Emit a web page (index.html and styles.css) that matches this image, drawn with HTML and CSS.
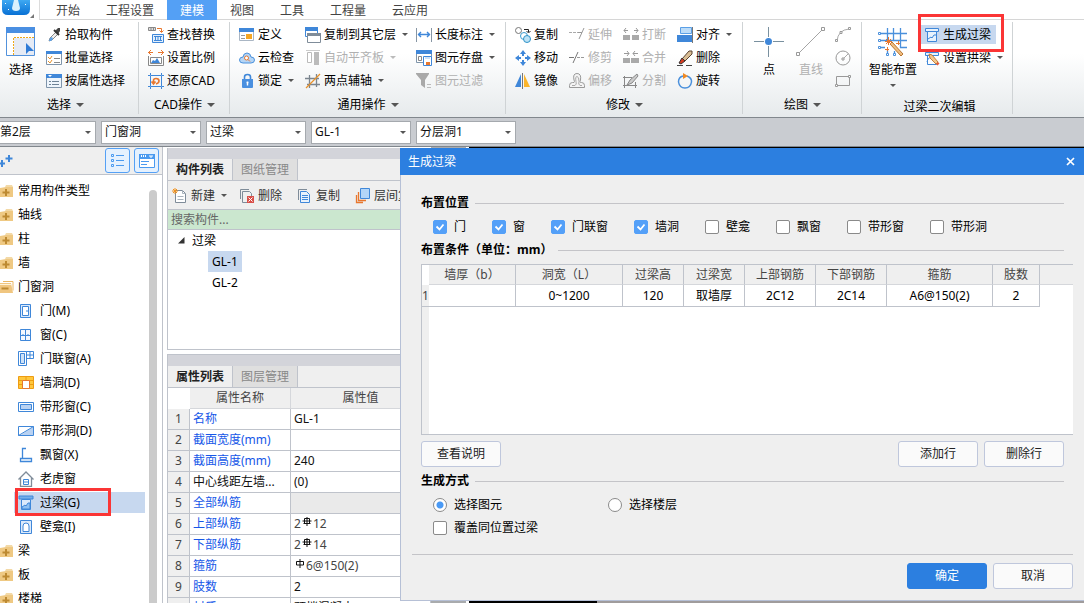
FILE: index.html
```html
<!DOCTYPE html>
<html lang="zh-CN">
<head>
<meta charset="utf-8">
<title>生成过梁</title>
<link rel="stylesheet" href="styles.css">
</head>
<body>
<svg class="sprite" aria-hidden="true">
  <symbol id="folder" viewBox="0 0 14 14"><path d="M6 1h6l1 2H5z" fill="#f3d9a6"/><path d="M0 4l6-1h7v10H0z" fill="#efc983"/><path d="M2.500 8.500h7M6 5v7" stroke="#bd8a32" stroke-width="2"/></symbol>
  <symbol id="folder-open" viewBox="0 0 14 14"><path d="M3 1.500h10v9" fill="none" stroke="#e9b763"/><path d="M0 3h11l2 10H0z" fill="#f0c680"/><path d="M0 4.500h11" stroke="#fff3d8"/><path d="M1.500 8.500h7" stroke="#bd8a32" stroke-width="2"/></symbol>
  <symbol id="rebar-c" viewBox="0 0 10 10"><path d="M5 0v9M2.500 1.500h5v5h-5zM.5 4h9M1.500 6.500h7" fill="none" stroke="#111"/></symbol>
  <symbol id="rebar-a" viewBox="0 0 10 10"><path d="M5 0v9M1.500 2.500h7v3.500h-7z" fill="none" stroke="#111"/></symbol>
  <symbol id="lintel" viewBox="0 0 16 16"><path d="M1.500 1.500h13v3h-13z" fill="#e8f2fc" stroke="#3f87d9"/><path d="M3.500 4.500h9v10h-9z" fill="#e8f2fc" stroke="#3f87d9"/><path d="M4 12l3-2 1 1 2-3h2" fill="none" stroke="#3f87d9"/></symbol>
</svg>

<header class="top">
  <button class="logo" aria-label="应用菜单"><svg width="34" height="19" viewBox="0 0 34 19"><defs><linearGradient id="lg" x1="0" y1="0" x2="0" y2="1"><stop offset="0" stop-color="#3fa9f2"/><stop offset="1" stop-color="#0870d4"/></linearGradient></defs><path d="M2 0h28v9q0 6-6 6H8q-6 0-6-6z" fill="url(#lg)"/><path d="M14 0h4l2 8q0 3-4 3t-4-3z" fill="#d9f1fd"/><path d="M5 3h1v1H5zM25 4h1v1h-1zM8 9h1v1H8z" fill="#fff"/><path d="M34 14v4h-4z" fill="#777"/></svg></button>
  <nav class="tabs">
    <button>开始</button><button>工程设置</button><button class="on">建模</button><button>视图</button><button>工具</button><button>工程量</button><button>云应用</button>
  </nav>
</header>

<section class="ribbon">
  <div class="group g-select">
    <div class="tools">
      <button class="big"><svg width="30" height="30" viewBox="0 0 30 30"><path d="M.5.5h28v28H.5z" fill="#fff" stroke="#5292dc"/><path d="M0 0h29v6H0z" fill="#4a8fe2"/><path d="M8 11h20v17H8z" fill="#e6ebf5"/><path d="M7.500 28V10.500H28" fill="none" stroke="#f0a818" stroke-dasharray="2 1"/><path d="M20 16l8 8h-5l-3 3z" fill="#2f7bd6"/></svg><span>选择</span></button>
      <div class="col c-80">
        <button class="tool"><svg viewBox="0 0 16 16"><path d="M3 14l1-3 6-6 2 2-6 6z" fill="#eee" stroke="#888"/><path d="M3 14l1-3 2-1 1 2-2 2z" fill="#5aa0e6"/><path d="M9 4l3-3h2v3l-2 3z" fill="#444"/><path d="M8 3l5 5" stroke="#333" stroke-width="2"/></svg>拾取构件</button>
        <button class="tool"><svg viewBox="0 0 16 16"><path d="M.5 1.500h15v13H.5z" fill="#fff" stroke="#7f95ab"/><path d="M0 1h16v3H0z" fill="#3f87d9"/><path d="M2 7l2 2 2-3M2 11l2 2 2-3" fill="none" stroke="#e8912a"/><path d="M8 8.500h6M8 12.500h6" stroke="#888"/></svg>批量选择</button>
        <button class="tool"><svg viewBox="0 0 16 16"><path d="M.5 1.500h15v13H.5z" fill="#eef5fc" stroke="#7f95ab"/><path d="M0 1h16v4H0z" fill="#3f87d9"/><path d="M2 2h4L4 4z" fill="#fff"/><path d="M3 8.500h2M3 11.500h2M6 8.500h7M6 11.500h7" stroke="#6d8296"/></svg>按属性选择</button>
      </div>
    </div>
    <button class="caption drop">选择</button>
  </div>

  <div class="group g-cad">
    <div class="tools">
      <div class="col c-80">
        <button class="tool"><svg viewBox="0 0 16 16"><path d="M.5.5h7v3h-7zM3 1v2M5.500 1v2" fill="#ddd" stroke="#888"/><path d="M9 1.500h4.500V5M11.500 3.500l2 2 2-2" fill="none" stroke="#e8772e"/><path d="M4.500 7.500h11v8h-11z" fill="#e4f0fc" stroke="#3f87d9"/><path d="M6 9.500h8M7.500 9v5M10 9v5M12.500 9v5M6 13.500h8" stroke="#3f87d9"/></svg>查找替换</button>
        <button class="tool"><svg viewBox="0 0 16 16"><path d="M0 2.500h5M10 2.500h6M3 0L.5 2.500 3 5M13 0l2.500 2.500L13 5" fill="none" stroke="#e8772e"/><path d="M.5 6v9.500h15V6" fill="none" stroke="#888"/><path d="M2.500 7.500h11v6h-11z" fill="#fff" stroke="#888"/><path d="M3 13l2-3 2 1 2-3 3 5z" fill="#3f87d9"/></svg>设置比例</button>
        <button class="tool"><svg viewBox="0 0 16 16"><path d="M2.500 2.500h11v11h-11zM0 2.500h2M14 2.500h2M0 13.500h2M14 13.500h2M2.500 0v2M13.500 0v2M2.500 14v2M13.500 14v2" fill="none" stroke="#3f87d9"/><path d="M5.500 10V7.500q0-2 2.500-2 3 0 3 2.500 0 2-3 3M3.500 8.500l2 2.500 2-2.500" fill="none" stroke="#e8772e" stroke-width="1.600"/></svg>还原CAD</button>
      </div>
    </div>
    <button class="caption drop">CAD操作</button>
  </div>

  <div class="group g-common">
    <div class="tools">
      <div class="col c-66">
        <button class="tool"><svg viewBox="0 0 16 16"><path d="M.5 1.500h14v12H.5z" fill="#fff" stroke="#aab6c4"/><path d="M0 1h15v4H0z" fill="#3f87d9"/><path d="M2 8.500h4M2 11.500h4" stroke="#999"/><path d="M7 7h6v5H7z" fill="#f5a623"/></svg>定义</button>
        <button class="tool"><svg viewBox="0 0 16 16"><path d="M4 13q-3.500 0-3.500-3T4 7q.5-4 4-4t4 4q3.500 0 3.500 3T12 13z" fill="#b5d5f5" stroke="#4a90dc"/><circle cx="7.500" cy="8" r="2" fill="#fff" stroke="#e8772e"/><path d="M9 9.500l2 2" stroke="#e8772e"/></svg>云检查</button>
        <button class="tool drop"><svg viewBox="0 0 16 16"><path d="M5.500 7V4Q5.500 1.500 8.500 1.500T11.500 4v3" fill="none" stroke="#3f87d9" stroke-width="1.600"/><path d="M3 6h11v8q0 1-1 1H4q-1 0-1-1z" fill="#4a90e0"/><path d="M8.500 8.500v4M7.500 9.500h2" stroke="#fff" stroke-width="1.400"/></svg>锁定</button>
      </div>
      <div class="col c-111">
        <button class="tool drop"><svg viewBox="0 0 16 16"><path d="M.5.5h12v9H.5z" fill="#fff" stroke="#3f87d9"/><path d="M0 0h13v4H0z" fill="#3f87d9"/><path d="M2.500 6.500h13v9h-13z" fill="#fff" stroke="#7f8c99"/><path d="M2 6h14v3H2z" fill="#7f8c99"/></svg>复制到其它层</button>
        <button class="tool drop" disabled><svg viewBox="0 0 16 16"><path d="M1 .5h14" stroke="#ccc"/><path d="M2.500 2.500h4v10h-4z" fill="#fff" stroke="#bbb"/><path d="M9 2h5v13H9z" fill="#bbb"/></svg>自动平齐板</button>
        <button class="tool drop"><svg viewBox="0 0 16 16"><path d="M4.500 2v13M11.500 1v13M0 5.500h14M2 11.500h13" stroke="#7b858e" stroke-width="1.300"/><path d="M1 15L15 1" stroke="#e8912a" stroke-width="1.300"/></svg>两点辅轴</button>
      </div>
      <div class="col c-80">
        <button class="tool drop"><svg viewBox="0 0 16 16"><path d="M.5 1v14M15.500 1v14" stroke="#8796a4"/><path d="M2 7.500h12M5 5L2.500 7.500 5 10M11 5l2.500 2.500L11 10" fill="none" stroke="#3f87d9" stroke-width="1.400"/></svg>长度标注</button>
        <button class="tool drop"><svg viewBox="0 0 16 16"><path d="M.5.5h15v12H.5z" fill="#fff" stroke="#7f95ab"/><path d="M0 0h16v4H0z" fill="#3f87d9"/><path d="M2.500 6.500h3v4h-3z" fill="#fff" stroke="#888"/><path d="M7.500 6.500h8v9h-8z" fill="#fff" stroke="#3f87d9"/><path d="M9 7h5v2H9z" fill="#cfe2f7"/><path d="M10 12h4v3h-4z" fill="#e8772e"/></svg>图元存盘</button>
        <button class="tool" disabled><svg viewBox="0 0 16 16"><path d="M0 0h13v1L9 7v8l-4-3V7L0 1z" fill="#a9a9a9"/><path d="M11 11.500h4M11 14.500h4" stroke="#bbb"/></svg>图元过滤</button>
      </div>
    </div>
    <button class="caption drop">通用操作</button>
  </div>

  <div class="group g-modify">
    <div class="tools">
      <div class="col c-54">
        <button class="tool"><svg viewBox="0 0 16 16"><circle cx="3.500" cy="3.500" r="3" fill="#fff" stroke="#777"/><path d="M9 2.500h4.500V5M11.500 4l2 2 2-2" fill="none" stroke="#222"/><circle cx="9" cy="9" r="3.500" fill="#fff" stroke="#3a9bd0"/><circle cx="12" cy="12" r="3.500" fill="#bde2f5" stroke="#2f93c8"/></svg>复制</button>
        <button class="tool"><svg viewBox="0 0 16 16"><path d="M8 0l3 4H5zM8 16l3-4H5zM0 8l4-3v6zM16 8l-4-3v6zM7 4h2v2H7zM7 10h2v2H7zM4 7h2v2H4zM10 7h2v2h-2z" fill="#3f87d9"/></svg>移动</button>
        <button class="tool"><svg viewBox="0 0 16 16"><path d="M6 1v13H0z" fill="#3f87d9"/><path d="M7.500 0v16" stroke="#777"/><path d="M9 1v13h6z" fill="#fbb52c"/></svg>镜像</button>
      </div>
      <div class="col c-54">
        <button class="tool" disabled><svg viewBox="0 0 16 16"><path d="M0 5.500h9" stroke="#aaa" stroke-dasharray="3 1"/><path d="M10 12l5-11M9 5.500h4" stroke="#999"/></svg>延伸</button>
        <button class="tool" disabled><svg viewBox="0 0 16 16"><path d="M0 7.500h5M4 13L9 2" stroke="#777"/><path d="M8 7.500h8" stroke="#999" stroke-dasharray="3 1"/></svg>修剪</button>
        <button class="tool" disabled><svg viewBox="0 0 16 16"><path d="M.5 14.500v-2q0-3 3-3h1.500q1-1 0-2.500Q3.500.5 8 .5t3.500 6.500q-1 1.500 0 2.500h1q3 0 3 3v2z" fill="#f4f4f4" stroke="#999"/><path d="M3 12.500h3q2-1 1-4Q6 3.500 8 3.500t2 5q-1 3 1 4h2" fill="none" stroke="#aaa"/></svg>偏移</button>
      </div>
      <div class="col c-54">
        <button class="tool" disabled><svg viewBox="0 0 16 16"><path d="M0 8h7v5H0zM9 8h7v5H9z" fill="#aaa"/><path d="M1 3.500h4M11 3.500h4M3 1L1 3.500 3 6M13 1l2 2.500L13 6" fill="none" stroke="#999"/></svg>打断</button>
        <button class="tool" disabled><svg viewBox="0 0 16 16"><path d="M0 8h7v5H0zM8 8h8v5H8z" fill="#aaa"/><path d="M1 3.500h5M10 3.500h5M4 1l2 2.500L4 6M12 1l-2 2.500L12 6" fill="none" stroke="#999"/></svg>合并</button>
        <button class="tool" disabled><svg viewBox="0 0 16 16"><path d="M0 4.500h9M1.500 3v12M0 12.500h14M12.500 9v6" stroke="#888"/><path d="M4 12l3-5 7-6 1 2-6 7z" fill="#ccc" stroke="#888"/></svg>分割</button>
      </div>
      <div class="col c-60">
        <button class="tool drop"><svg viewBox="0 0 16 16"><path d="M3.500.5h11v6h-11z" fill="#bcdcf8" stroke="#5a9fe6"/><path d="M0 8h15v7H0z" fill="#3f87d9"/><path d="M15.500 0v16" stroke="#777"/></svg>对齐</button>
        <button class="tool"><svg viewBox="0 0 16 16"><path d="M5 9l7-8 3 0v3l-7 7z" fill="#d9bd94" stroke="#594331"/><path d="M2 13l3-5 3 3-4 3z" fill="#d83b20" stroke="#333"/><path d="M0 15.500h6M9 15.500h6" stroke="#444"/></svg>删除</button>
        <button class="tool"><svg viewBox="0 0 16 16"><path d="M10 3q5 2 4.500 6-1 6-6.500 6-5.500 0-6.500-6Q1.500 4 6 3" fill="none" stroke="#4a90dc" stroke-width="1.500"/><path d="M6 0l5 3-5 3z" fill="#f08a24"/></svg>旋转</button>
      </div>
    </div>
    <button class="caption drop">修改</button>
  </div>

  <div class="group g-draw">
    <div class="tools">
      <button class="big"><svg width="30" height="30" viewBox="0 0 30 30"><path d="M14.500 0v30M0 14.500h30" stroke="#79909f"/><circle cx="14.500" cy="14.500" r="4.500" fill="#fff"/><circle cx="14.500" cy="14.500" r="3.500" fill="#3f87d9"/></svg><span>点</span></button>
      <button class="big" disabled><svg width="30" height="30" viewBox="0 0 30 30"><path d="M2 27L27 2" stroke="#a5a5a5"/><path d="M.5 25.500h3v3h-3zM25.500.5h3v3h-3z" fill="#fff" stroke="#999"/></svg><span>直线</span></button>
      <div class="col c-icon">
        <button class="tool" disabled aria-label="弧"><svg viewBox="0 0 16 16"><path d="M2 14Q3 3 14 2" fill="none" stroke="#aaa"/><path d="M.5 12.500h2v2h-2zM13.500.5h2v2h-2zM5 4.500h2v2H5z" fill="#fff" stroke="#999"/></svg></button>
        <button class="tool" disabled aria-label="圆"><svg viewBox="0 0 16 16"><circle cx="8" cy="8" r="7" fill="none" stroke="#999"/><path d="M8 9l5-5" stroke="#aaa"/><path d="M7 8h2v2H7z" fill="#fff" stroke="#999"/></svg></button>
        <button class="tool" disabled aria-label="矩形"><svg viewBox="0 0 16 16"><path d="M1.500 3.500h13v9h-13z" fill="none" stroke="#999"/><path d="M.5 11.500h2v2h-2zM13.500 2.500h2v2h-2z" fill="#fff" stroke="#999"/></svg></button>
      </div>
    </div>
    <button class="caption drop">绘图</button>
  </div>

  <div class="group g-lintel">
    <div class="tools">
      <button class="big below"><svg width="30" height="30" viewBox="0 0 30 30"><path d="M9.500 1v12M15.500 1v13M22.500 1v20M2 6.500h27M2 13.500h27M9.500 22v5M16.500 24v3M22 20.500h7M2 20.500h5" stroke="#4a90dc" stroke-width="1.300"/><path d="M.5 5.500h2v2h-2zM.5 12.500h2v2h-2zM.5 19.500h2v2h-2zM8.500 26.500h2v2h-2zM15.500 26.500h2v2h-2z" fill="#fff" stroke="#4a90dc"/><path d="M12 17l2-2 11 12-2 2z" fill="#efbd80" stroke="#b87531"/><path d="M10.500 10v8M7 14.500h7M8 12l5 5M13 12l-5 5M20.500 14v4M18 16.500h4M9.500 20v4M7 22.500h4" stroke="#e8772e"/></svg><span>智能布置</span></button>
      <div class="col c-80">
        <button class="tool active"><svg><use href="#lintel"/></svg>生成过梁</button>
        <button class="tool drop"><svg viewBox="0 0 16 16"><path d="M1.500 2.500h13v3h-13z" fill="#e8f2fc" stroke="#3f87d9"/><path d="M3.500 5.500v9h9v-3M3 12q1-5 5-5" fill="none" stroke="#3f87d9"/><path d="M5 4l3 1 6 7-2 2-6-6z" fill="#f3c78e" stroke="#c0803c"/><path d="M12 14l2-2 1.500 1.500-2 2z" fill="#e25a3a"/></svg>设置拱梁</button>
      </div>
      <span class="mark"></span>
    </div>
    <button class="caption">过梁二次编辑</button>
  </div>
</section>

<section class="filters">
  <label class="pick first"><select aria-label="楼层"><option>第2层</option></select></label>
  <label class="pick"><select aria-label="构件分类"><option>门窗洞</option></select></label>
  <label class="pick"><select aria-label="构件类型"><option>过梁</option></select></label>
  <label class="pick"><select aria-label="构件"><option>GL-1</option></select></label>
  <label class="pick"><select aria-label="分层"><option>分层洞1</option></select></label>
</section>

<main class="work">
  <aside class="side">
    <div class="side-bar">
      <button class="plus" aria-label="添加"><svg width="14" height="12" viewBox="0 0 14 12"><path d="M9 0v7M5.500 3.500h7M2 5v7M0 8.500h5" stroke="#3f87d9" stroke-width="2"/></svg></button>
      <button class="view" aria-label="列表"><svg width="14" height="14" viewBox="0 0 14 14"><path d="M.5.500h2v2h-2zM.5 5.500h2v2h-2zM.5 10.500h2v2h-2zM5 1.500h8M5 6.500h8M5 11.500h8" fill="none" stroke="#4a9af0"/></svg></button>
      <button class="view" aria-label="详情"><svg width="16" height="14" viewBox="0 0 16 14"><path d="M.5.5h15v13H.5z" fill="#fff" stroke="#4a9af0"/><path d="M0 0h16v5H0z" fill="#4a9af0"/><path d="M2.500 1v2M4.500 1v2M6.500 1v2M10 2h4M12 2v2" stroke="#fff"/><path d="M2 7.500h8M2 10.500h6" stroke="#4a9af0"/></svg></button>
    </div>
    <div class="tree-wrap">
      <ul class="tree">
        <li><button><svg class="f"><use href="#folder"/></svg>常用构件类型</button></li>
        <li><button><svg class="f"><use href="#folder"/></svg>轴线</button></li>
        <li><button><svg class="f"><use href="#folder"/></svg>柱</button></li>
        <li><button><svg class="f"><use href="#folder"/></svg>墙</button></li>
        <li><button><svg class="f"><use href="#folder-open"/></svg>门窗洞</button>
          <ul>
            <li><button><svg viewBox="0 0 16 16"><path d="M2.500 1.500h10v13h-10z" fill="#dceafb" stroke="#3f87d9"/><path d="M4.500 3.500h6v9h-6z" fill="#fff" stroke="#3f87d9"/><path d="M9 7v2" stroke="#3f87d9"/></svg>门(M)</button></li>
            <li><button><svg viewBox="0 0 16 16"><path d="M2.500 2.500h10v11h-10zM7.500 2.500v11M2.500 8.500h10M5 7v1M10 7v1" fill="#f4f9ff" stroke="#3f87d9"/></svg>窗(C)</button></li>
            <li><button><svg viewBox="0 0 16 16"><path d="M.5.5h8v14h-8z" fill="#fff" stroke="#3f87d9"/><path d="M2.500 2.500h4v10h-4z" fill="#cfe2f7" stroke="#3f87d9"/><path d="M8.500.5h7v7h-7zM12 .5v7M8.500 4h7" fill="none" stroke="#3f87d9"/></svg>门联窗(A)</button></li>
            <li><button><svg viewBox="0 0 16 16"><path d="M.5 1.500h15v12H.5z" fill="#ffc83d" stroke="#ee9c12"/><path d="M8 1v4M0 5.500h16M0 9.500h4M12 9.500h4" stroke="#ee9c12"/><path d="M4.500 5.500h7v8h-7z" fill="#fff" stroke="#e8772e"/></svg>墙洞(D)</button></li>
            <li><button><svg viewBox="0 0 16 16"><path d="M.5 3.500h15v9H.5z" fill="#fff" stroke="#3f87d9"/><path d="M2.500 5.500h11v5h-11z" fill="#b9d2f2" stroke="#3f87d9"/></svg>带形窗(C)</button></li>
            <li><button><svg viewBox="0 0 16 16"><path d="M15 4v9H1z" fill="#b9d2f2"/><path d="M.5 3.500h15v9H.5zM.5 12.500l15-9" fill="none" stroke="#3f87d9"/></svg>带形洞(D)</button></li>
            <li><button><svg viewBox="0 0 16 16"><path d="M8 1.500H4.500V12M2.500 11.500h11v3h-11z" fill="none" stroke="#3f87d9" stroke-width="1.300"/></svg>飘窗(X)</button></li>
            <li><button><svg viewBox="0 0 16 16"><path d="M.5 8.500L8 1l7.500 7.500M2.500 7v8.500h11V7" fill="none" stroke="#7f8c99" stroke-width="1.300"/><path d="M5.500 8.500h5v5h-5zM5.500 11h5" fill="#fff" stroke="#3f87d9"/></svg>老虎窗</button></li>
            <li class="now"><button><svg viewBox="0 0 16 16"><path d="M1 1h14v3H1z" fill="#74aeea" stroke="#3f87d9"/><path d="M3.500 4.500h9v10h-9z" fill="#dceafb" stroke="#3f87d9"/><path d="M4 12l3-2 1 1 2-3h2v6H4z" fill="#8ec0f2" stroke="#3f87d9"/></svg>过梁(G)</button><span class="mark"></span></li>
            <li><button><svg viewBox="0 0 16 16"><path d="M2.500 1.500h11v13h-11z" fill="#dceafb" stroke="#3f87d9"/><path d="M5 12.500V7q0-3 3-3t3 3v5.500z" fill="#fff" stroke="#3f87d9"/></svg>壁龛(I)</button></li>
          </ul>
        </li>
        <li><button><svg class="f"><use href="#folder"/></svg>梁</button></li>
        <li><button><svg class="f"><use href="#folder"/></svg>板</button></li>
        <li><button><svg class="f"><use href="#folder"/></svg>楼梯</button></li>
      </ul>
      <div class="thumb"></div>
    </div>
  </aside>

  <div class="panels">
    <section class="panel list">
      <div class="band"></div>
      <div class="ptabs"><button class="on">构件列表</button><button>图纸管理</button></div>
      <div class="pbar">
        <button class="drop"><svg viewBox="0 0 16 16"><path d="M3.500 2.500h7l3 3v9h-10z" fill="#fff" stroke="#7f8c99"/><path d="M10.500 2.500v3h3M5.500 8.500h6M5.500 11.500h6" fill="none" stroke="#a9b3bc"/><path d="M3 0v6M0 3h6M1 1l4 4M5 1L1 5" stroke="#f0921e"/></svg>新建</button>
        <button><svg viewBox="0 0 16 16"><path d="M1.500 11V1.500H10M9 14.500H3.500v-11h7l2 2V8" fill="none" stroke="#7f8c99"/><path d="M8 8h7v7H8z" fill="#d9504a"/><path d="M9.500 9.500l4 4M13.500 9.500l-4 4" stroke="#fff"/></svg>删除</button>
        <button><svg viewBox="0 0 16 16"><path d="M1.500 12V1.500H10" fill="none" stroke="#7f8c99"/><path d="M3.500 3.500h6l3 3v8h-9z" fill="#e8f2fc" stroke="#3f87d9"/><path d="M5 7.500h6M5 9.500h6M5 11.500h6" stroke="#3f87d9"/></svg>复制</button>
        <button><svg viewBox="0 0 16 16"><path d="M5.500.5h9v10h-9z" fill="#b3d5f8" stroke="#3f87d9"/><path d="M3.500 4v8.500H11M1.500 7v7.500H8" fill="none" stroke="#e8772e" stroke-width="1.300"/></svg>层间复制</button>
      </div>
      <input class="search" type="search" placeholder="搜索构件..." aria-label="搜索构件">
      <ul class="items">
        <li><svg width="7" height="7" viewBox="0 0 7 7"><path d="M6.500 0v6.500H0z" fill="#333"/></svg>过梁</li>
        <li class="kid"><button class="on">GL-1</button></li>
        <li class="kid"><button>GL-2</button></li>
      </ul>
    </section>
    <section class="panel props">
      <div class="band"></div>
      <div class="ptabs"><button class="on">属性列表</button><button>图层管理</button></div>
      <table class="ptable">
        <thead><tr><td></td><th>属性名称</th><th>属性值</th></tr></thead>
        <tbody>
          <tr><td>1</td><td class="key">名称</td><td>GL-1</td></tr>
          <tr><td>2</td><td class="key">截面宽度(mm)</td><td></td></tr>
          <tr><td>3</td><td class="key">截面高度(mm)</td><td>240</td></tr>
          <tr><td>4</td><td>中心线距左墙...</td><td>(0)</td></tr>
          <tr><td>5</td><td class="key">全部纵筋</td><td class="off"></td></tr>
          <tr><td>6</td><td class="key">上部纵筋</td><td class="soft">2<svg><use href="#rebar-c"/></svg>12</td></tr>
          <tr><td>7</td><td class="key">下部纵筋</td><td class="soft">2<svg><use href="#rebar-c"/></svg>14</td></tr>
          <tr><td>8</td><td class="key">箍筋</td><td class="soft"><svg><use href="#rebar-a"/></svg>6@150(2)</td></tr>
          <tr><td>9</td><td class="key">肢数</td><td>2</td></tr>
          <tr><td>10</td><td class="key">材质</td><td>预拌混凝土</td></tr>
        </tbody>
      </table>
    </section>
  </div>
  <div class="rail"></div>
  <div class="canvas"><div class="status"></div></div>

  <form class="dialog" role="dialog" aria-labelledby="dlg-title">
    <header class="dlg-head"><h1 id="dlg-title">生成过梁</h1><button type="button" aria-label="关闭"><svg width="9" height="9" viewBox="0 0 9 9"><path d="M1 1l7 7M8 1L1 8" stroke="#fff" stroke-width="1.700"/></svg></button></header>
    <div class="dlg-body">
      <div class="inset">
        <h2>布置位置</h2>
        <div class="checks">
          <label><input type="checkbox" checked>门</label>
          <label><input type="checkbox" checked>窗</label>
          <label><input type="checkbox" checked>门联窗</label>
          <label><input type="checkbox" checked>墙洞</label>
          <label><input type="checkbox">壁龛</label>
          <label><input type="checkbox">飘窗</label>
          <label><input type="checkbox">带形窗</label>
          <label><input type="checkbox">带形洞</label>
        </div>
        <h2>布置条件（单位：mm）</h2>
      </div>
      <div class="grid-wrap">
        <table class="rules">
          <colgroup><col class="w-8"><col class="w-87"><col class="w-107"><col class="w-61"><col class="w-61"><col class="w-71"><col class="w-71"><col class="w-106"><col class="w-47"><col></colgroup>
          <thead><tr><td></td><th>墙厚（b）</th><th>洞宽（L）</th><th>过梁高</th><th>过梁宽</th><th>上部钢筋</th><th>下部钢筋</th><th>箍筋</th><th>肢数</th><th class="fill"></th></tr></thead>
          <tbody><tr><td>1</td><td></td><td>0~1200</td><td>120</td><td>取墙厚</td><td>2C12</td><td>2C14</td><td>A6@150(2)</td><td>2</td><td class="fill"></td></tr></tbody>
        </table>
      </div>
      <div class="inset">
        <div class="row-btns"><button type="button" class="btn">查看说明</button><button type="button" class="btn push">添加行</button><button type="button" class="btn">删除行</button></div>
        <h2>生成方式</h2>
        <div class="modes">
          <label><input type="radio" name="mode" checked>选择图元</label>
          <label><input type="radio" name="mode">选择楼层</label>
          <label><input type="checkbox">覆盖同位置过梁</label>
        </div>
      </div>
      <footer class="dlg-foot"><button type="submit" class="btn primary">确定</button><button type="button" class="btn">取消</button></footer>
    </div>
  </form>
</main>
</body>
</html>
```

FILE: styles.css
```css
* { box-sizing: border-box; }
html, body { height: 100%; }
body {
  margin: 0;
  display: flex;
  flex-direction: column;
  overflow: hidden;
  background: #fff;
  color: #111;
  font: 12px/16px "Noto Sans", "Noto Sans CJK SC", sans-serif;
}
button, input, select { font: inherit; color: inherit; }
button { margin: 0; padding: 0; border: 0; background: none; white-space: nowrap; }
ul, h1, h2 { margin: 0; padding: 0; list-style: none; font-size: 12px; }
svg { flex: none; display: block; }
.sprite { position: absolute; width: 0; height: 0; }

/* Title tabs */
.top { flex: none; display: flex; height: 20px; }
.logo { width: 39px; }
.logo svg { margin-bottom: 1px; }
.tabs { flex: 1; display: flex; padding-left: 3px; border-left: 1px solid #dcdcdc; border-bottom: 1px solid #d6d6d6; }
.tabs button { height: 20px; padding: 2px 13px 0; color: #444; }
.tabs .on { background: #54a0f5; color: #fff; }

/* Ribbon */
.ribbon {
  flex: none;
  display: flex;
  height: 98px;
  background: linear-gradient(#fff 35%, #e6eaec);
  border-bottom: 1px solid #81878d;
}
.group { position: relative; flex: none; display: flex; flex-direction: column; padding: 3px 0 0 9px; }
.group::after { content: ""; position: absolute; top: 2px; bottom: 3px; right: 0; width: 1px; background: #cfd3d5; }
.g-select { width: 139px; padding-left: 0; }
.g-cad { width: 91px; }
.g-common { width: 276px; }
.g-modify { width: 237px; }
.g-draw { width: 119px; }
.g-lintel { width: 151px; }
.tools { position: relative; flex: none; display: flex; height: 71px; }
.col { display: flex; flex-direction: column; }
.c-54 { width: 54px; }
.c-60 { width: 60px; }
.c-66 { width: 66px; }
.c-80 { width: 80px; }
.c-111 { width: 111px; }
.tool { display: flex; align-items: center; gap: 3px; height: 23px; color: #000; }
.tool svg { width: 16px; height: 16px; }
.tool:disabled, .big:disabled { color: #b0b0b0; }
.drop::after {
  content: "";
  flex: none;
  margin-left: 3px;
  border: 3px solid transparent;
  border-top-color: #555;
  border-bottom: 0;
}
.tool:disabled.drop::after { border-top-color: #bbb; }
.big { display: flex; flex-direction: column; align-items: center; gap: 5px; width: 42px; padding-top: 4px; color: #000; }
.g-select .big { margin-right: 4px; }
.g-draw .tools { margin-left: -4px; }
.g-draw .c-icon { margin-left: 3px; }
.g-lintel .tools { margin-left: -5px; }
.big.below { width: 54px; margin-right: 4px; padding-left: 0; }
.big.below::after { content: ""; margin-top: 1px; border: 3px solid transparent; border-top-color: #555; border-bottom: 0; }
.active { width: 75px; height: 19px; margin: 2px 0 2px -3px; padding-left: 3px; background: #c7d8ef; }
.caption { display: flex; align-items: center; justify-content: center; gap: 3px; height: 22px; margin-left: -9px; color: #000; }
.g-select .caption { margin-left: 0; padding-right: 8px; }
.g-lintel .tools { height: 74px; }
.g-lintel .caption { padding-left: 4px; }
.caption.drop::after { margin-left: 2px; border-width: 4px 4px 0; }
.mark { position: absolute; border: 3px solid #fb3535; pointer-events: none; }
.g-lintel .mark { top: -9px; left: 52px; width: 86px; height: 38px; }

/* Filter drop-downs */
.filters { flex: none; display: flex; align-items: center; gap: 5px; height: 29px; background: #c9ccd1; border-bottom: 1px solid #81878d; }
.pick { position: relative; width: 100px; height: 23px; }
.pick select { appearance: none; width: 100%; height: 100%; padding: 0 3px; border: 1px solid #a5a9ae; border-radius: 0; background: #fff; color: #111; }
.pick::after { content: ""; position: absolute; right: 5px; top: 10px; border: 3px solid transparent; border-top-color: #555; border-bottom: 0; pointer-events: none; }
.pick.first { width: 96px; }
.first select { padding-left: 0; border-left: 0; }

/* Work area */
.work { position: relative; flex: 1; min-height: 0; display: flex; overflow: hidden; }
.side { flex: none; display: flex; flex-direction: column; width: 163px; border-right: 1px solid #bfc3cb; }
.side-bar { flex: none; display: flex; align-items: center; gap: 4px; height: 28px; padding-right: 3px; background: #efefef; border-bottom: 1px solid #bfc3cb; }
.plus { margin-right: auto; }
.view { display: grid; place-items: center; width: 25px; height: 25px; border: 1px solid #54a0f5; border-radius: 3px; background: #e5f1fe; }
.tree-wrap { flex: 1; min-height: 0; display: flex; overflow: hidden; }
.tree { flex: 1; padding-top: 4px; }
.tree button { display: flex; align-items: center; gap: 6px; height: 24px; color: #000; }
.tree svg { width: 16px; height: 16px; }
.tree .f { width: 14px; height: 14px; margin-right: -2px; }
.tree ul button { padding-left: 18px; }
.tree .now { position: relative; }
.now::before { content: ""; position: absolute; z-index: -1; inset: 1px 4px 2px 14px; background: #c7d8ef; }
.now .mark { left: 15px; top: -3px; width: 96px; height: 28px; }
.thumb { flex: none; width: 8px; margin: 15px 5px 0 0; border-radius: 4px 4px 0 0; background: #cbcbcb; }

.panels { flex: none; display: flex; flex-direction: column; gap: 4px; width: 268px; padding: 1px 0 0 4px; }
.panel { flex: none; display: flex; flex-direction: column; border: 1px solid #bfc3cb; border-width: 0 0 1px 1px; background: #fff; }
.band { height: 11px; background: #d3d4da; }
.props .band { height: 12px; border-top: 1px solid #bfc3cb; }
.ptabs { display: flex; height: 22px; background: #efefef; border-bottom: 1px solid #bfc3cb; }
.ptabs button { width: 65px; background: #dfdfdf; color: #888; border-right: 1px solid #bfc3cb; }
.ptabs .on { background: #efefef; color: #222; font-weight: 600; }
.pbar { display: flex; align-items: center; gap: 15px; height: 29px; padding: 1px 0 0 4px; overflow: hidden; background: #efefef; border-bottom: 1px solid #bfc3cb; }
.pbar button { display: flex; align-items: center; gap: 3px; color: #333; }
.pbar .drop { margin-right: -3px; }
.pbar svg { width: 16px; height: 16px; }
.search { height: 20px; padding: 0 3px; border: 0; border-bottom: 1px solid #bfc3cb; border-radius: 0; background: #cbe7cf; appearance: none; }
.search::placeholder { color: #666; opacity: 1; }
.items { height: 119px; color: #000; }
.items li { display: flex; align-items: center; gap: 7px; height: 21px; padding-left: 10px; }
.items .kid { padding-left: 40px; }
.items button { height: 21px; padding: 0 4px; }
.items .on { background: #c7d8ef; }

.ptable { border-collapse: separate; border-spacing: 0; table-layout: fixed; width: 100%; }
.ptable th { height: 21px; padding: 0; background: #efefef; border-right: 1px solid #d5d7db; border-bottom: 1px solid #d5d7db; color: #444; font-weight: 400; }
.ptable thead td { width: 22px; padding: 0; background: #fff; }
.ptable th:nth-child(2) { width: 101px; }
.ptable tbody td { height: 21px; padding: 0 3px; border-right: 1px solid #bfc3cb; border-bottom: 1px solid #bfc3cb; white-space: nowrap; overflow: hidden; }
.ptable tbody td:first-child { padding: 0; background: #efefef; text-align: center; color: #444; }
.ptable tbody .key { color: #1657e8; }
.ptable tbody .off { background: #eaeaea; }
.ptable tbody .soft { color: #444; }
.ptable svg { display: inline-block; width: 10px; height: 10px; margin: 0 1px; vertical-align: 1px; }

.rail { flex: none; width: 38px; background: #a9abad; border-right: 3px solid #fff; }
.canvas { flex: 1; display: flex; flex-direction: column; justify-content: flex-end; background: #000; }
.status { height: 2px; margin-left: 128px; background: #a09c9c; }

/* Dialog */
.dialog { position: absolute; top: 1px; right: 0; bottom: 2px; left: 400px; display: flex; flex-direction: column; background: #efefef; }
.dlg-head { flex: none; display: flex; align-items: center; justify-content: space-between; height: 27px; padding: 0 9px 0 8px; background: #2c7fe0; color: #fff; }
.dlg-head h1 { font-weight: 400; }
.dlg-body { flex: 1; display: flex; flex-direction: column; padding: 16px 11px 11px; border: solid #b6c0d6; border-width: 0 0 1px 1px; }
.inset { padding: 0 9px; }
.dialog h2 { display: flex; align-items: center; gap: 6px; height: 24px; color: #000; font-weight: 700; }
.dialog h2::after { content: ""; flex: 1; height: 1px; background: #c4c4c8; }
.checks { display: flex; gap: 26px; height: 23px; padding-left: 12px; }
.dialog label { display: flex; align-items: center; gap: 7px; white-space: nowrap; color: #000; }
.dialog input { flex: none; appearance: none; width: 14px; height: 14px; margin: 0; border: 1px solid #8a8a8a; border-radius: 2px; background: #fff; }
.dialog input[type="checkbox"]:checked {
  border-color: #54a0f8;
  background: #54a0f8 url("data:image/svg+xml,%3Csvg xmlns='http://www.w3.org/2000/svg' viewBox='0 0 12 12'%3E%3Cpath d='M2.500 5.500l3 3 4-5' fill='none' stroke='white' stroke-width='1.800'/%3E%3C/svg%3E") center / 12px no-repeat;
}
.dialog input[type="radio"] { border-radius: 50%; }
.dialog input[type="radio"]:checked { background: radial-gradient(#4a9af5 0 3px, #fff 4px); }
.grid-wrap { flex: 1; margin: 2px 0 6px 9px; border: solid #bfc3cb; border-width: 1px 0 1px 1px; background: linear-gradient(90deg, #efefef 7px, #fff 7px); }
.rules { width: 100%; border-collapse: separate; border-spacing: 0; table-layout: fixed; }
.w-8 { width: 7px; }
.w-47 { width: 47px; }
.w-61 { width: 61px; }
.w-71 { width: 71px; }
.w-87 { width: 87px; }
.w-106 { width: 106px; }
.w-107 { width: 107px; }
.rules th, .rules td { padding: 0; text-align: center; white-space: nowrap; font-weight: 400; border-right: 1px solid #bfc3cb; }
.rules th { height: 20px; background: #efefef; border-bottom: 1px solid #d5d7db; color: #444; }
.rules thead td { background: #fff; border: 0; }
.rules tbody td { height: 22px; background: #fff; border-bottom: 1px solid #bfc3cb; color: #000; }
.rules tbody td:first-child { background: #efefef; border-right: 0; color: #444; }
.rules th.fill, .rules tbody .fill { border-right: 0; }
.rules tbody .fill { border-bottom: 0; }
.row-btns { display: flex; gap: 6px; margin-bottom: 2px; }
.push { margin-left: auto; }
.btn { width: 80px; height: 26px; border: 1px solid #bfc7dc; border-radius: 3px; background: #fafafa; color: #222; }
.primary { border-color: #2c7fe0; background: #2c7fe0; color: #fff; }
.modes { display: grid; grid-template-columns: 175px auto; grid-auto-rows: 23px; justify-content: start; padding-left: 12px; }
.dlg-foot { display: flex; justify-content: flex-end; gap: 6px; margin-top: 15px; padding-top: 8px; border-top: 1px solid #c4c4c8; }
```
